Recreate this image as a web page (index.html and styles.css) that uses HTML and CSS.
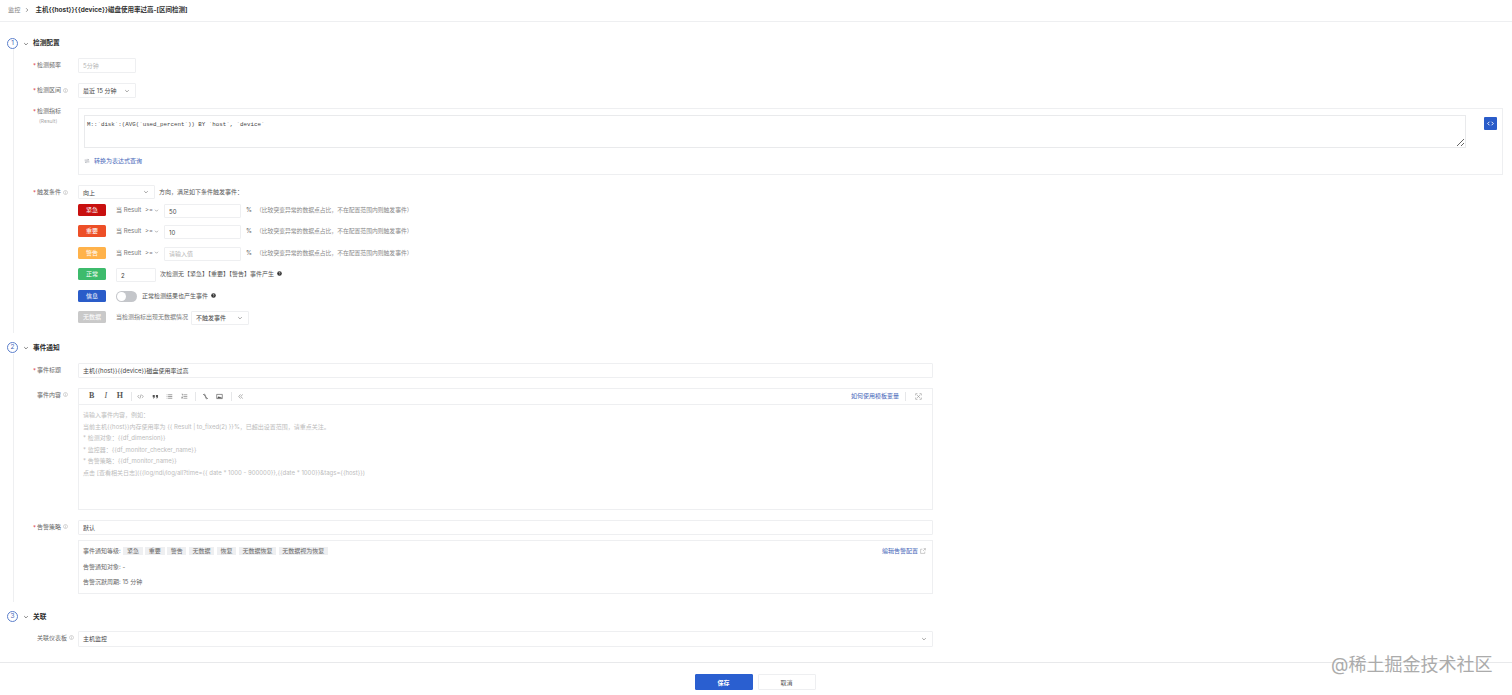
FILE: index.html
```html
<!DOCTYPE html>
<html lang="en">
<head>
  <meta charset="UTF-8" />
  <title>主机磁盘使用率过高</title>
  <link rel="stylesheet" href="styles.css">
</head>
<body>

  <svg class="sprite" width="0" height="0">
    <symbol id="chev" viewBox="0 0 10 10"><path d="M2 3.5l3 3 3-3" fill="none" stroke="currentColor" stroke-width="1.1"/></symbol>
    <symbol id="info" viewBox="0 0 10 10"><circle cx="5" cy="5" r="4" fill="none" stroke="currentColor" stroke-width=".8"/><path d="M5 4.4v3M5 2.6v1" stroke="currentColor" stroke-width=".9"/></symbol>
    <symbol id="help" viewBox="0 0 10 10"><circle cx="5" cy="5" r="4.6" fill="#333"/><path d="M3.7 4c0-1.7 2.7-1.7 2.7 0 0 1-1.4 1-1.4 2.1M5 6.9v1" fill="none" stroke="#fff" stroke-width="1"/></symbol>
  </svg>

  <div class="topbar">
    <span class="crumb">监控</span>
    <svg class="crumb-sep"><use href="#chev"/></svg>
    <span class="page-title">主机{{host}}{{device}}磁盘使用率过高-[区间检测]</span>
  </div>

  <div class="main">

    <div class="section-head">
      <span class="step">1</span>
      <svg class="chev"><use href="#chev"/></svg>
      <span class="section-title">检测配置</span>
    </div>
    <div class="section-body">
      <div class="row">
        <label class="label req">检测频率</label>
        <div class="field"><input class="input w58" placeholder="5分钟" readonly></div>
      </div>
      <div class="row">
        <label class="label req">检测区间 <svg class="info"><use href="#info"/></svg></label>
        <div class="field"><div class="select w58">最近 15 分钟<svg class="chev"><use href="#chev"/></svg></div></div>
      </div>
      <div class="row">
        <label class="label req query-label">检测指标<small>(Result)</small></label>
        <div class="field query-box">
          <div class="query-top">
            <textarea class="query" readonly>M::`disk`:(AVG(`used_percent`)) BY `host`, `device`</textarea>
            <button class="code-btn" type="button">
              <svg width="7" height="7" viewBox="0 0 10 10"><path d="M3.5 2.5L1 5l2.5 2.5M6.5 2.5L9 5 6.5 7.5" fill="none" stroke="#fff" stroke-width="1.3"/></svg>
            </button>
          </div>
          <div class="switch-link">
            <svg width="6" height="6" viewBox="0 0 10 10"><path d="M1 3.5h7L6 1.5M9 6.5H2l2 2" fill="none" stroke="#8a8f99" stroke-width="1"/></svg>
            <span>转换为表达式查询</span>
          </div>
        </div>
      </div>
      <div class="row trigger">
        <label class="label req">触发条件 <svg class="info"><use href="#info"/></svg></label>
        <div class="field">
          <div class="inline">
            <div class="select w77">向上<svg class="chev"><use href="#chev"/></svg></div>
            <span class="text ml4">方向，满足如下条件触发事件：</span>
          </div>

          <div class="level">
            <span class="badge critical">紧急</span>
            <span class="when">当 Result</span>
            <span class="op">&gt;=<svg class="chev"><use href="#chev"/></svg></span>
            <input class="input w77" value="50" readonly>
            <span class="pct">%</span>
            <span class="hint">（比较突变异常的数据点占比，不在配置范围内则触发事件）</span>
          </div>
          <div class="level">
            <span class="badge major">重要</span>
            <span class="when">当 Result</span>
            <span class="op">&gt;=<svg class="chev"><use href="#chev"/></svg></span>
            <input class="input w77" value="10" readonly>
            <span class="pct">%</span>
            <span class="hint">（比较突变异常的数据点占比，不在配置范围内则触发事件）</span>
          </div>
          <div class="level">
            <span class="badge warn">警告</span>
            <span class="when">当 Result</span>
            <span class="op">&gt;=<svg class="chev"><use href="#chev"/></svg></span>
            <input class="input w77" placeholder="请输入值" readonly>
            <span class="pct">%</span>
            <span class="hint">（比较突变异常的数据点占比，不在配置范围内则触发事件）</span>
          </div>
          <div class="level">
            <span class="badge ok">正常</span>
            <input class="input w40" value="2" readonly>
            <span class="text ml4">次检测无【紧急】【重要】【警告】事件产生</span>
            <svg class="help"><use href="#help"/></svg>
          </div>
          <div class="level">
            <span class="badge notice">信息</span>
            <span class="toggle"></span>
            <span class="text ml5">正常检测结果也产生事件</span>
            <svg class="help"><use href="#help"/></svg>
          </div>
          <div class="level">
            <span class="badge nodata">无数据</span>
            <span class="text nodata-text">当检测指标出现无数据情况</span>
            <div class="select w58">不触发事件<svg class="chev"><use href="#chev"/></svg></div>
          </div>
        </div>
      </div>
    </div>

    <div class="section-head">
      <span class="step">2</span>
      <svg class="chev"><use href="#chev"/></svg>
      <span class="section-title">事件通知</span>
    </div>
    <div class="section-body">
      <div class="row">
        <label class="label req">事件标题</label>
        <div class="field"><input class="input wide" value="主机{{host}}{{device}}磁盘使用率过高" readonly></div>
      </div>
      <div class="row">
        <label class="label plain">事件内容 <svg class="info"><use href="#info"/></svg></label>
        <div class="field editor wide">
          <div class="toolbar">
            <span class="tool serif">B</span>
            <span class="tool serif slant">I</span>
            <span class="tool serif">H</span>
            <i class="tool-sep"></i>
            <svg class="tool-icon" viewBox="0 0 10 10"><path d="M3 3L1 5l2 2M7 3l2 2-2 2M6 2L4 8" fill="none" stroke="#777" stroke-width=".8"/></svg>
            <svg class="tool-icon" viewBox="0 0 10 10"><path d="M1 3h3v3.2L2.6 8H1.6l.8-2H1zM5.6 3h3v3.2L7.2 8h-1l.8-2H5.6z" fill="#555"/></svg>
            <svg class="tool-icon" viewBox="0 0 10 10"><path d="M1 2.5h1M3 2.5h6M1 5h1M3 5h6M1 7.5h1M3 7.5h6" stroke="#666" stroke-width=".9"/></svg>
            <svg class="tool-icon" viewBox="0 0 10 10"><path d="M1 1.5h1.2v2M1 5.5h1.2v1H1v1h1.2M3.5 2.5H9M3.5 5H9M3.5 7.5H9" fill="none" stroke="#666" stroke-width=".8"/></svg>
            <i class="tool-sep"></i>
            <svg class="tool-icon" viewBox="0 0 10 10"><path d="M1.5 2.5l2-1 1.5 2-1 1M8.5 7.5l-2 1-1.5-2 1-1M3 3l4 4" fill="none" stroke="#555" stroke-width="1"/></svg>
            <svg class="tool-icon" viewBox="0 0 10 10"><path d="M1 2h8v6H1z" fill="none" stroke="#555" stroke-width=".9"/><path d="M1.5 7.5L4 4.5l2 2 1-1 1.5 2z" fill="#555"/></svg>
            <i class="tool-sep"></i>
            <svg class="tool-icon" viewBox="0 0 10 10"><path d="M5 2L2.5 5 5 8M8 2L5.5 5 8 8" fill="none" stroke="#777" stroke-width=".8"/></svg>
            <span class="tool-link">如何使用模板变量</span>
            <i class="tool-sep end"></i>
            <svg class="tool-icon expand" viewBox="0 0 10 10"><path d="M1 3.5V1h2.5M6.5 1H9v2.5M9 6.5V9H6.5M3.5 9H1V6.5M3 3l4 4M7 3L3 7" fill="none" stroke="#888" stroke-width=".8"/></svg>
          </div>
          <div class="editor-body">
            <p>请输入事件内容，例如：</p>
            <p>当前主机{{host}}内存使用率为 {{ Result | to_fixed(2) }}%，已超出设置范围，请重点关注。</p>
            <p>* 检测对象：{{df_dimension}}</p>
            <p>* 监控器：{{df_monitor_checker_name}}</p>
            <p>* 告警策略：{{df_monitor_name}}</p>
            <p>点击 [查看相关日志]({{log/ndi/log/all?time={{ date * 1000 - 900000}},{{date * 1000}}&amp;tags={{host}})</p>
          </div>
        </div>
      </div>
      <div class="row tight">
        <label class="label req">告警策略 <svg class="info"><use href="#info"/></svg></label>
        <div class="field"><input class="input wide" value="默认" readonly></div>
      </div>
      <div class="row close">
        <span class="label"></span>
        <div class="field policy wide">
          <div class="policy-line">
            <span>事件通知等级:</span>
            <span class="tag">紧急</span><span class="tag">重要</span><span class="tag">警告</span><span class="tag">无数据</span><span class="tag">恢复</span><span class="tag">无数据恢复</span><span class="tag">无数据视为恢复</span>
            <span class="edit-link">编辑告警配置
              <svg width="6" height="6" viewBox="0 0 10 10"><path d="M8 6v3H1V2h3M5 5l4-4M6 1h3v3" fill="none" stroke="#aaa" stroke-width="1"/></svg>
            </span>
          </div>
          <div class="policy-line">告警通知对象: -</div>
          <div class="policy-line">告警沉默周期: 15 分钟</div>
        </div>
      </div>
    </div>

    <div class="section-head">
      <span class="step">3</span>
      <svg class="chev"><use href="#chev"/></svg>
      <span class="section-title">关联</span>
    </div>
    <div class="section-body last">
      <div class="row">
        <label class="label plain">关联仪表板 <svg class="info"><use href="#info"/></svg></label>
        <div class="field"><div class="select wide tall">主机监控<svg class="chev"><use href="#chev"/></svg></div></div>
      </div>
    </div>
  </div>

  <div class="footer">
    <button class="btn primary" type="button">保存</button>
    <button class="btn" type="button">取消</button>
  </div>

  <div class="watermark">@稀土掘金技术社区</div>

</body>
</html>
```

FILE: styles.css
```css
* { box-sizing: border-box; }
html, body { height: 100%; }
body { margin: 0; height: 695px; overflow: hidden; display: flex; flex-direction: column; background: #fff; color: #444; font-family: Inter, "Noto Sans CJK SC", sans-serif; font-size: 6px; line-height: 12px; }
.sprite { position: absolute; }

.topbar { height: 22px; flex: none; display: flex; align-items: center; padding: 0 0 1px 8px; border-bottom: 1px solid #eeeff1; }
.crumb { color: #888; font-size: 6.2px; }
.crumb-sep { width: 6px; height: 6px; margin: 0 5px 0 4px; color: #666; transform: rotate(-90deg); }
.page-title { color: #333; font-size: 6.5px; font-weight: 700; }

.main { flex: 1; padding-top: 15px; min-height: 0; }
.section-head { height: 12px; display: flex; align-items: center; padding-left: 7px; }
.step { width: 11px; height: 11px; border: 1px solid #5c7fcc; border-radius: 50%; color: #3f64b8; font-size: 6.5px; line-height: 9px; text-align: center; }
.section-head .chev { width: 6px; height: 6px; margin: 1px 4.5px 0; color: #444; }
.section-title { color: #2b2b2b; font-size: 6.7px; font-weight: 700; }

.section-body { margin: 0 9px 9px 13px; padding: 9px 0 8px 19px; border-left: 1px solid #eeeff1; }
.section-body.last { border-left-color: transparent; padding-top: 8px; padding-bottom: 0; margin-bottom: 0; }

.row { display: flex; margin-bottom: 10px; }
.row:last-child { margin-bottom: 0; }
.row.trigger { margin-bottom: 0; }
.row.tight { margin-bottom: 5px; }
.label { flex: none; width: 45px; color: #666; line-height: 13px; padding-left: 4px; position: relative; }
.label.req::before { content: "*"; position: absolute; left: 0; top: 1px; color: #d9363e; font-size: 6px; }
.label.query-label { margin-top: -4px; }
.label small { display: block; padding-left: 2px; color: #aaa; font-size: 5px; line-height: 9px; }
.info { width: 5px; height: 5px; color: #999; vertical-align: -0.5px; }
.field { flex: 1; min-width: 0; }

.input, .select { height: 15px; padding: 0 4px; border: 1px solid #eeeff1; border-radius: 1px; background: #fff; color: #444; font: 6px Inter, "Noto Sans CJK SC", sans-serif; outline: none; }
.input::placeholder { color: #b5b5b5; }
.select { display: flex; align-items: center; justify-content: space-between; }
.select .chev { width: 6px; height: 6px; color: #777; margin-right: 1px; }
.w58 { width: 58px; }
.w77 { width: 77px; }
.w40 { width: 40px; }
.wide { flex: none; width: 855px; }
.tall { height: 16px; }

.query-box { height: 67px; padding: 6px 5px 0; border: 1px solid #eeeff1; }
.query-top { display: flex; align-items: flex-start; }
.query { flex: 1; height: 33px; padding: 4px 2px 0; border: 1px solid #e9eaec; color: #444; font: 5.8px/9px "Liberation Mono", monospace; outline: none; }
.code-btn { width: 13px; height: 13px; margin: 2px 0 0 18px; padding: 0; display: flex; align-items: center; justify-content: center; border: 0; border-radius: 1px; background: #2a5cc9; }
.switch-link { display: flex; align-items: center; gap: 4px; margin-top: 7px; color: #3f64b8; }

.inline { display: flex; align-items: center; height: 14px; }
.inline .select { height: 14px; }
.text { color: #555; white-space: nowrap; }
.ml4 { margin-left: 4px; }
.ml5 { margin-left: 5px; }

.level { display: flex; align-items: flex-start; height: 14px; margin-top: 7.4px; }
.inline + .level { margin-top: 5px; }
.level .input, .level .select { height: 14px; }
.badge { flex: none; width: 28px; height: 12px; margin-right: 10px; border-radius: 1.5px; color: #fff; line-height: 12px; text-align: center; }
.critical { background: #c8100f; }
.major { background: #ed4f27; }
.warn { background: #ffb24a; }
.ok { background: #3dbb6c; }
.notice { background: #2a5cc9; }
.nodata { background: #c9c9c9; }
.when { width: 29px; color: #777; }
.op { display: flex; align-items: center; width: 19px; color: #777; }
.op .chev { width: 5px; height: 5px; margin-left: 1px; }
.pct { width: 13px; margin-left: 5px; color: #666; }
.hint { color: #888; font-size: 5.8px; white-space: nowrap; margin-left: -3px; }
.help { width: 5px; height: 5px; margin: 3px 0 0 3px; }
.toggle { position: relative; width: 21px; height: 11px; margin-top: 1px; border-radius: 6px; background: #c4c6ca; }
.toggle::after { content: ""; position: absolute; left: 1px; top: 1px; width: 9px; height: 9px; border-radius: 50%; background: #fff; }
.nodata-text { width: 75px; color: #777; }

.editor { height: 122px; border: 1px solid #eeeff1; }
.toolbar { height: 16px; display: flex; align-items: center; padding-left: 5.75px; border-bottom: 1px solid #eeeff1; }
.tool { width: 14px; color: #555; font-size: 8px; font-weight: 700; text-align: center; }
.serif { font-family: "Liberation Serif", serif; }
.slant { font-style: italic; font-weight: 400; }
.tool-sep { width: 1px; height: 9px; margin: 0 1.5px 0 4px; background: #e6e7e9; }
.tool-icon { width: 7px; height: 7px; margin: 0 3.75px; }
.tool-link { margin-left: auto; color: #3f64b8; }
.tool-sep.end { margin: 0 9px 0 6px; }
.tool-icon.expand { margin: 0 10px 0 0; }
.editor-body { padding: 4px 4px; color: #bcbcbc; }
.editor-body p { margin: 0; line-height: 11.6px; white-space: nowrap; }

.policy { height: 54px; padding: 5.5px 4px; border: 1px solid #eeeff1; color: #666; }
.policy-line { display: flex; align-items: center; height: 10px; margin-bottom: 5.5px; white-space: pre; }
.tag { height: 8px; margin-left: 2.5px; padding: 0 3.7px; background: #eeeff1; color: #666; line-height: 8px; }
.edit-link { display: flex; align-items: center; gap: 2px; margin: 0 2px 0 auto; color: #3f64b8; white-space: nowrap; }

.footer { height: 33px; flex: none; display: flex; justify-content: center; gap: 5px; padding: 11px 2px 0 0; border-top: 1px solid #e8e9eb; }
.btn { width: 58px; height: 16px; padding: 0; border: 1px solid #eeeff1; border-radius: 1px; background: #fff; color: #555; font: 6px Inter, "Noto Sans CJK SC", sans-serif; }
.btn.primary { border-color: #2a5fd0; background: #2a5fd0; color: #fff; font-weight: 700; }

.watermark { position: absolute; left: 1331px; top: 653px; color: #ababab; font-size: 18px; line-height: 24px; white-space: nowrap; }
```
